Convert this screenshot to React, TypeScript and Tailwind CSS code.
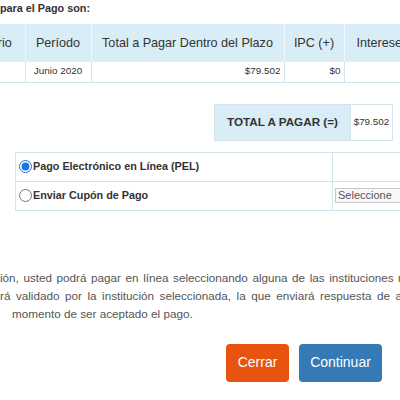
import React from "react";

export default function App() {
  return (
    <div className="relative w-[400px] h-[400px] overflow-hidden bg-white font-['Liberation_Sans',Arial,sans-serif] text-[#333]">
      <div className="pt-[1px] pl-[0px] text-[10.8px] font-bold leading-[14px] text-[#333] whitespace-nowrap">
        para el Pago son:
      </div>

      <table className="mt-[9px] ml-[-61px] table-fixed border-collapse w-[520px]">
        <colgroup>
          <col className="w-[86px]" />
          <col className="w-[66px]" />
          <col className="w-[193px]" />
          <col className="w-[60px]" />
          <col className="w-[115px]" />
        </colgroup>
        <thead>
          <tr className="h-[38px] bg-[#d9edf7]">
            <th className="border-r border-[#eef7fb] text-[12.6px] font-normal text-[#333] text-center px-[8px] whitespace-nowrap overflow-hidden">Formulario</th>
            <th className="border-r border-[#eef7fb] text-[12.6px] font-normal text-[#333] text-center px-[8px] whitespace-nowrap">Período</th>
            <th className="border-r border-[#eef7fb] text-[12.6px] font-normal text-[#333] text-center px-[8px] whitespace-nowrap">Total a Pagar Dentro del Plazo</th>
            <th className="border-r border-[#eef7fb] text-[12.6px] font-normal text-[#333] text-center px-[8px] whitespace-nowrap">IPC (+)</th>
            <th className="text-[12.6px] font-normal text-[#333] text-left pl-[12px] whitespace-nowrap overflow-hidden">Intereses y Multas (+)</th>
          </tr>
        </thead>
        <tbody>
          <tr className="h-[20px] border-b border-[#d3e4ec]">
            <td className="border-r border-[#d3e4ec]"></td>
            <td className="border-r border-[#d3e4ec] text-[9.9px] text-center text-[#333]">Junio 2020</td>
            <td className="border-r border-[#d3e4ec] text-[9.9px] text-right pr-[3px] text-[#333]">$79.502</td>
            <td className="border-r border-[#d3e4ec] text-[9.9px] text-right pr-[3px] text-[#333]">$0</td>
            <td></td>
          </tr>
        </tbody>
      </table>

      <div className="mt-[21px] flex justify-end pr-[7px]">
        <div className="flex h-[37px] border border-[#d3e4ec]">
          <div className="w-[135px] bg-[#d9edf7] flex items-center justify-center text-[11.7px] font-bold text-[#333] whitespace-nowrap">
            TOTAL A PAGAR (=)
          </div>
          <div className="w-[42px] bg-white border-l border-[#d3e4ec] flex items-center justify-center text-[9.9px] text-[#333]">
            $79.502
          </div>
        </div>
      </div>

      <table className="mt-[11px] ml-[15px] table-fixed border-collapse w-[420px]">
        <colgroup>
          <col className="w-[317px]" />
          <col className="w-[103px]" />
        </colgroup>
        <tbody>
          <tr className="h-[29px] border border-[#d3e4ec]">
            <td className="border-r border-[#d3e4ec] pl-[3px]">
              <label className="flex items-center gap-[0px] text-[10.8px] font-bold text-[#333] whitespace-nowrap">
                <input type="radio" name="pago" defaultChecked className="m-0 mr-[1px] w-[13px] h-[13px] accent-[#1a73e8]" />
                Pago Electrónico en Línea (PEL)
              </label>
            </td>
            <td></td>
          </tr>
          <tr className="h-[29px] border border-[#d3e4ec]">
            <td className="border-r border-[#d3e4ec] pl-[3px]">
              <label className="flex items-center gap-[0px] text-[10.8px] font-bold text-[#333] whitespace-nowrap">
                <input type="radio" name="pago" className="m-0 mr-[1px] w-[13px] h-[13px] accent-[#1a73e8]" />
                Enviar Cupón de Pago
              </label>
            </td>
            <td className="pl-[2px]">
              <div className="h-[15px] w-[90px] border border-[#c8c8c8] bg-[#f8f8f8] text-[11px] leading-[13px] text-[#555] pl-[2px] whitespace-nowrap">
                Seleccione
              </div>
            </td>
          </tr>
        </tbody>
      </table>

      <div className="mt-[58px] text-[11.7px] leading-[18px] text-[#555]">
        <div className="w-[402px] text-justify [text-align-last:justify] whitespace-nowrap">
          ión, usted podrá pagar en línea seleccionando alguna de las instituciones r
        </div>
        <div className="w-[402px] text-justify [text-align-last:justify] whitespace-nowrap">
          rá validado por la institución seleccionada, la que enviará respuesta de a
        </div>
        <div className="pl-[12px] whitespace-nowrap">momento de ser aceptado el pago.</div>
      </div>

      <div className="mt-[21px] flex justify-end gap-[10px] pr-[18px]">
        <button className="h-[38px] w-[63px] rounded-[4px] bg-[#e8540f] text-white text-[14px]">Cerrar</button>
        <button className="h-[38px] w-[83px] rounded-[4px] bg-[#337ab7] text-white text-[14px]">Continuar</button>
      </div>
    </div>
  );
}
